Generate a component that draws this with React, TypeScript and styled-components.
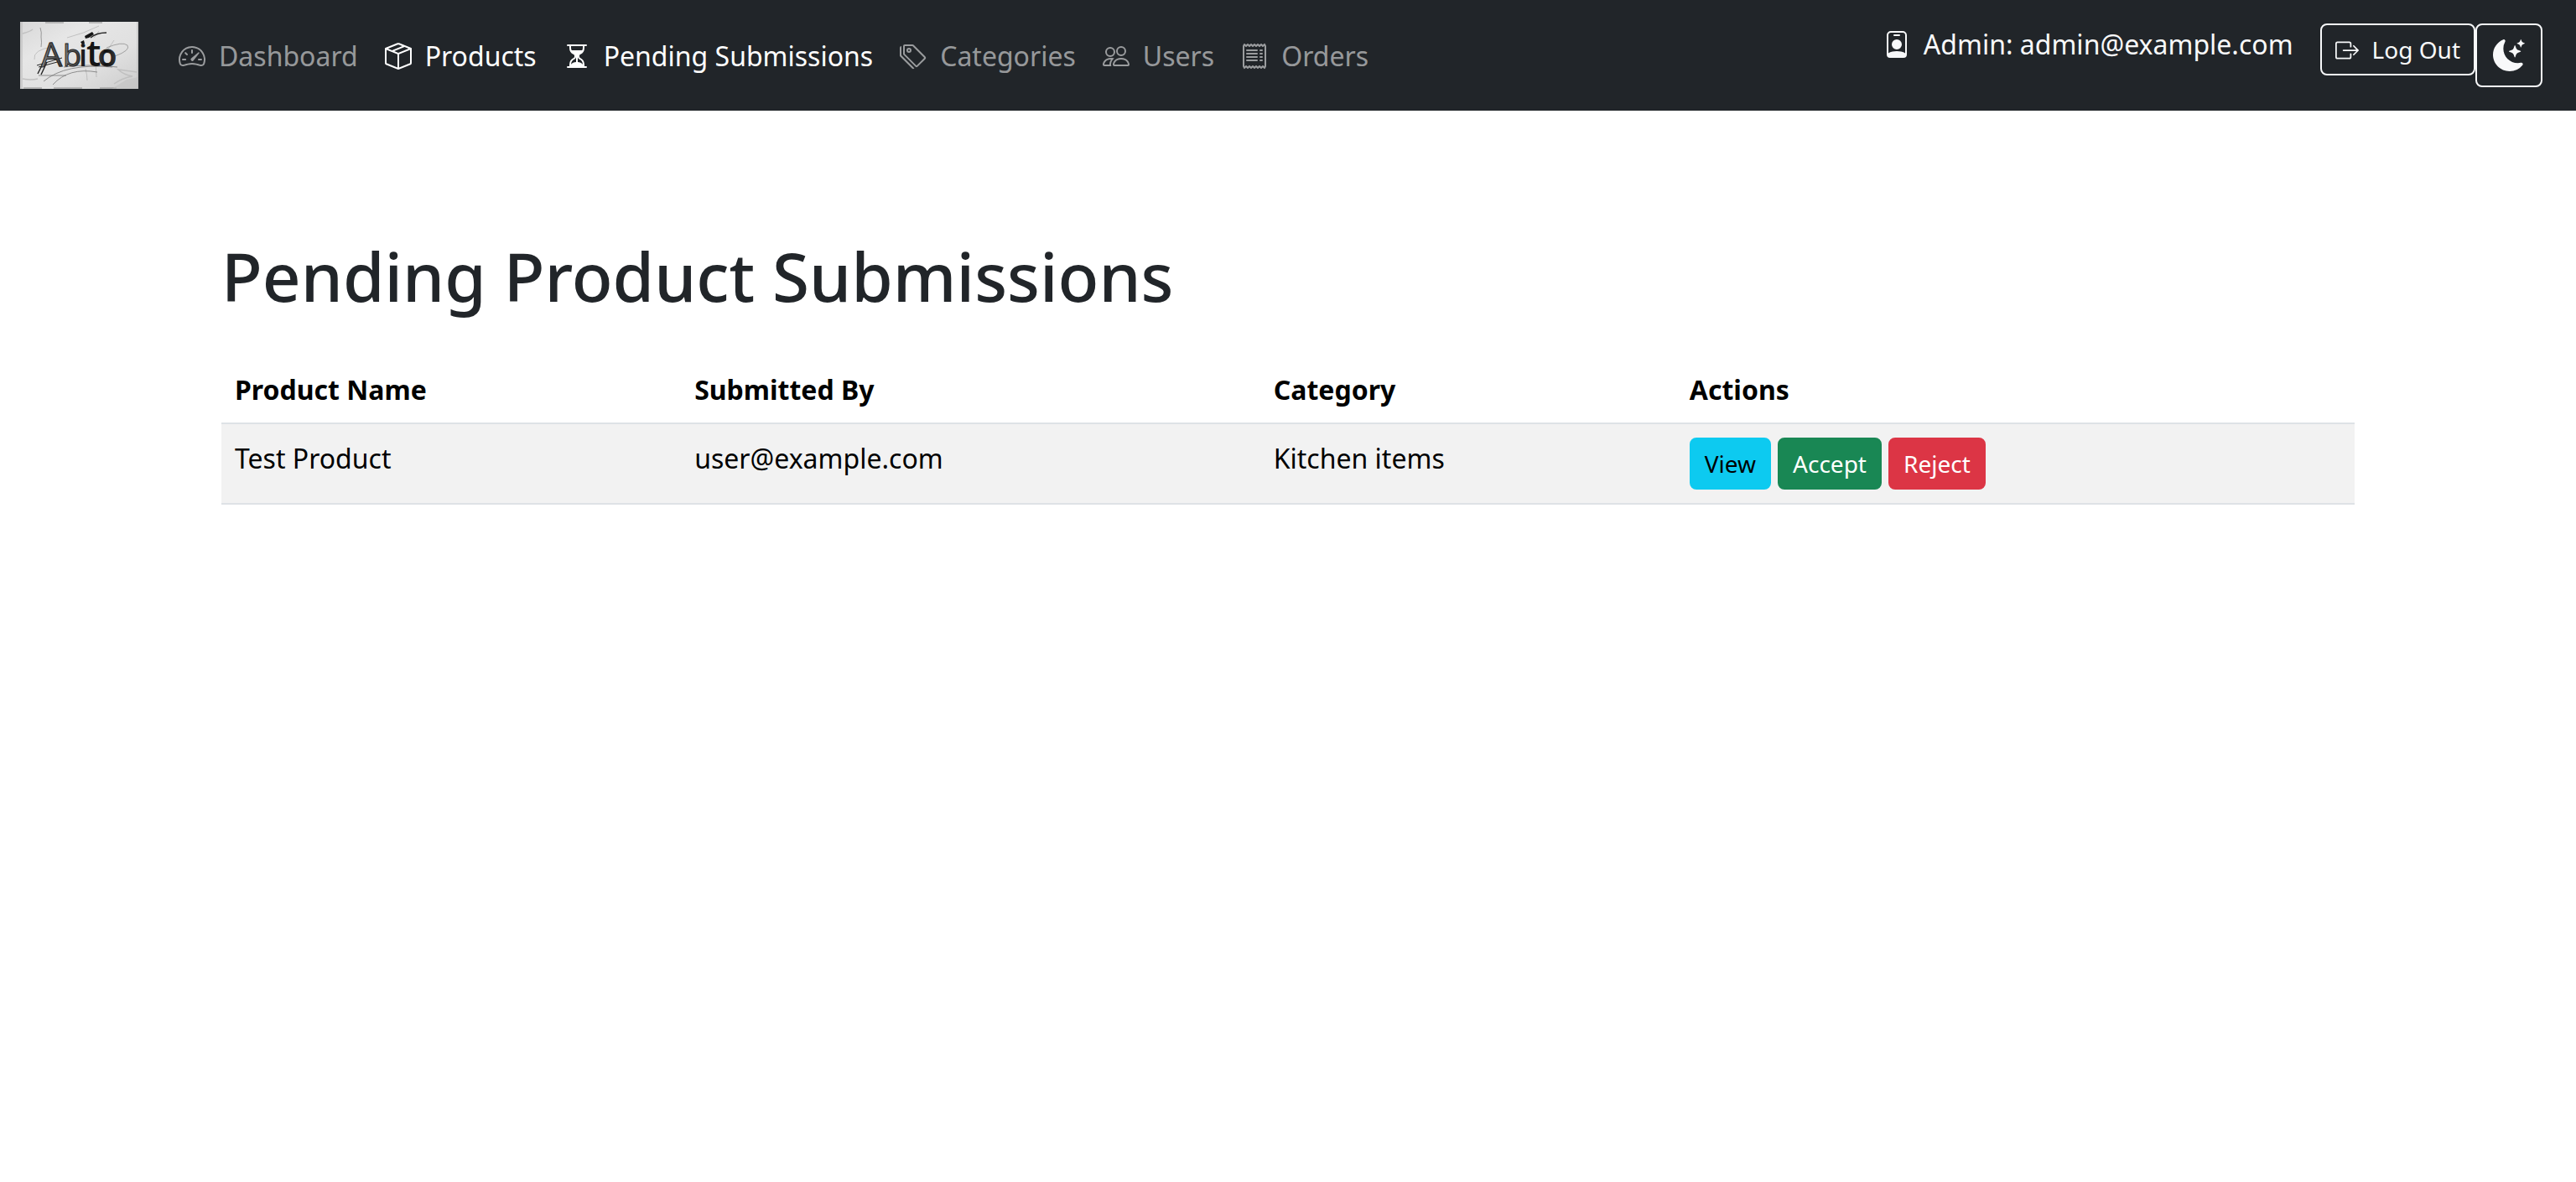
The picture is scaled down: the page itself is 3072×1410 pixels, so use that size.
import React, { useState } from "react";
import styled, { createGlobalStyle } from "styled-components";
import {
  BsBoxArrowRight,
  BsBoxSeam,
  BsHourglassSplit,
  BsMoonStarsFill,
  BsPeople,
  BsPersonBadge,
  BsReceipt,
  BsSpeedometer2,
  BsTags,
} from "react-icons/bs";

const GlobalStyle = createGlobalStyle`
  *, *::before, *::after { box-sizing: border-box; }
  body {
    margin: 0;
    background: #fff;
    color: #212529;
    font-family: "Noto Sans", "Liberation Sans", sans-serif;
    font-size: 32px;
    line-height: 49px;
  }
`;

const Navbar = styled.nav`
  display: flex;
  align-items: center;
  padding: 16px 40px 16px 24px;
  background: #212529;
`;

const Brand = styled.a`
  display: flex;
  margin-right: 32px;
  padding: 10px 0;
`;

const LogoArt = styled.svg`
  display: block;
  width: 141px;
  height: 80px;
`;

const NavList = styled.ul`
  display: flex;
  margin: 0 auto 0 0;
  padding: 0;
  list-style: none;
`;

const NavLink = styled.a<{ $active?: boolean }>`
  display: block;
  padding: 16px 16px 15px;
  color: ${(p) => (p.$active ? "#fff" : "rgba(255, 255, 255, 0.55)")};
  text-decoration: none;
  white-space: nowrap;
`;

const Icon = styled.span`
  margin-right: 16px;

  svg {
    display: inline-block;
    width: 1em;
    height: 1em;
    vertical-align: -0.125em;
  }
`;

const Account = styled.div`
  display: flex;
  align-items: flex-start;
  color: #f8f9fa;
`;

const AdminName = styled.span`
  margin-right: 32px;
  white-space: nowrap;
`;

const SmallButton = styled.button`
  padding: 8px 16px;
  border: 2px solid transparent;
  border-radius: 8px;
  font-family: inherit;
  font-size: 28px;
  line-height: 42px;
  white-space: nowrap;
  cursor: pointer;
`;

const LogoutButton = styled(SmallButton)`
  border-color: #f8f9fa;
  background: transparent;
  color: #f8f9fa;
`;

const ThemeButton = styled.button`
  display: flex;
  align-items: center;
  justify-content: center;
  width: 80px;
  height: 76px;
  padding: 0;
  border: 2px solid #f8f9fa;
  border-radius: 8px;
  background: transparent;
  color: #f8f9fa;
  font-size: 38px;
  cursor: pointer;
`;

const Main = styled.main`
  max-width: 2640px;
  margin: 0 auto;
  padding: 148px 48px 48px;
`;

const Title = styled.h1`
  margin: 0 0 46px;
  font-size: 80px;
  font-weight: 500;
  line-height: 98px;
`;

const Table = styled.table`
  width: 100%;
  border-collapse: collapse;
  color: #000;
`;

const HeadCell = styled.th`
  padding: 16px 16px 15px;
  border-bottom: 2px solid #dee2e6;
  font-weight: 700;
  text-align: left;
`;

const Cell = styled.td`
  padding: 16px;
  border-bottom: 2px solid #dee2e6;
  background: #f2f2f2;
  vertical-align: top;
`;

const Actions = styled.div`
  display: flex;
  gap: 8px;
`;

const tones = {
  info: { bg: "#0dcaf0", fg: "#000" },
  success: { bg: "#198754", fg: "#fff" },
  danger: { bg: "#dc3545", fg: "#fff" },
};

const ActionButton = styled(SmallButton)<{ $tone: keyof typeof tones }>`
  background: ${(p) => tones[p.$tone].bg};
  border-color: ${(p) => tones[p.$tone].bg};
  color: ${(p) => tones[p.$tone].fg};
`;

const navItems = [
  { label: "Dashboard", icon: <BsSpeedometer2 /> },
  { label: "Products", icon: <BsBoxSeam />, active: true },
  { label: "Pending Submissions", icon: <BsHourglassSplit />, active: true },
  { label: "Categories", icon: <BsTags /> },
  { label: "Users", icon: <BsPeople /> },
  { label: "Orders", icon: <BsReceipt /> },
];

const submissions = [
  { name: "Test Product", by: "user@example.com", category: "Kitchen items" },
];

/* Pencil-sketch logo on crumpled paper. */
function Logo() {
  return (
    <LogoArt viewBox="0 0 141 80" role="img" aria-label="Abito">
      <defs>
        <linearGradient id="paper" x1="0" y1="0" x2="1" y2="1">
          <stop offset="0" stopColor="#d8d8d8" />
          <stop offset="0.3" stopColor="#e6e6e6" />
          <stop offset="0.65" stopColor="#e0e0e0" />
          <stop offset="1" stopColor="#cccccc" />
        </linearGradient>
        <linearGradient id="ink" x1="0" y1="0" x2="1" y2="0">
          <stop offset="0" stopColor="#444" />
          <stop offset="0.4" stopColor="#0c0c0c" />
          <stop offset="1" stopColor="#3a3a3a" />
        </linearGradient>
        <linearGradient id="graphite" x1="0" y1="0" x2="1" y2="0">
          <stop offset="0" stopColor="#8a8a8a" />
          <stop offset="0.5" stopColor="#5a5a5a" />
          <stop offset="1" stopColor="#333" />
        </linearGradient>
      </defs>
      <rect width="141" height="80" fill="url(#paper)" />
      <path d="M0 0h3v80H0zM139 0h2v80h-2z" fill="#bdbdbd" opacity="0.6" />
      <path d="M30 1h22M82 1h16M4 79h22M40 79h34M95 79h20" stroke="#8c8c8c" strokeWidth="1" />
      <path d="M3 14q8-2 12-5M3 68q10 2 18 0M139 60q-14-2-22-3 6 6 17 8-12 2-22 9" fill="none" stroke="#c0c0c0" strokeWidth="1.5" />
      <path d="M141 66l-14 3-18 11h32z" fill="#c2c2c2" opacity="0.6" />
      <g fill="none" stroke="#a8a8a8" strokeWidth="0.6">
        <path d="M24 7q2 6 1 11 1 7 0 12" stroke="#666" />
        <path d="M17 45q-2-12 22-15M56 19q20-5 38-14M88 19l6-8M78 56q2 8 2 14M90 48l1 18M104 34l8-12" />
        <path d="M113 41Q132 34 128 28 122 23 103 31" stroke="#777" />
      </g>
      <g fill="none" stroke="#777" strokeWidth="0.8">
        <path d="M22 64h33M28 71Q54 49 110 54M39 75Q58 54 92 60M52 54Q80 50 116 54" />
        <path d="M84 19q7-6 19-6" stroke="#222" strokeWidth="1.3" />
        <path d="M20 52l30-9M22 54l26-7" stroke="#222" strokeWidth="1" />
        <path d="M28 48L21 62M32 48L25 63" stroke="#222" strokeWidth="1.4" />
      </g>
      <path d="M77 17l9-5 2 3-6 4-4 1zM72 24l4-2 1 4-3 1z" fill="#161616" />
      <g fontFamily="Open Sans, sans-serif" fontWeight="600">
        <text x="25" y="54" fontSize="40" fontWeight="400" fill="url(#graphite)" stroke="#222" strokeWidth="1" transform="rotate(-2 25 54)">A</text>
        <text x="51" y="53" fontSize="36" fontWeight="400" fill="url(#graphite)" stroke="#222" strokeWidth="1">b</text>
        <text x="70" y="53" fontSize="36" fill="#1c1c1c">i</text>
        <text x="79" y="53" fontSize="44" fill="#151515">t</text>
        <text x="93" y="53" fontSize="36" fill="url(#ink)" stroke="#222" strokeWidth="1">o</text>
      </g>
    </LogoArt>
  );
}

export default function App() {
  const [dark, setDark] = useState(false);

  return (
    <>
      <GlobalStyle />
      <Navbar aria-label="Main">
        <Brand href="#">
          <Logo />
        </Brand>
        <NavList>
          {navItems.map((item) => (
            <li key={item.label}>
              <NavLink href="#" $active={item.active}>
                <Icon>{item.icon}</Icon>
                {item.label}
              </NavLink>
            </li>
          ))}
        </NavList>
        <Account>
          <AdminName>
            <Icon>
              <BsPersonBadge />
            </Icon>
            Admin: admin@example.com
          </AdminName>
          <LogoutButton type="button">
            <Icon>
              <BsBoxArrowRight />
            </Icon>
            Log Out
          </LogoutButton>
          <ThemeButton
            type="button"
            aria-label="Toggle dark mode"
            aria-pressed={dark}
            onClick={() => setDark(!dark)}
          >
            <BsMoonStarsFill />
          </ThemeButton>
        </Account>
      </Navbar>
      <Main>
        <Title>Pending Product Submissions</Title>
        <Table>
          <thead>
            <tr>
              <HeadCell scope="col">Product Name</HeadCell>
              <HeadCell scope="col">Submitted By</HeadCell>
              <HeadCell scope="col">Category</HeadCell>
              <HeadCell scope="col">Actions</HeadCell>
            </tr>
          </thead>
          <tbody>
            {submissions.map((s) => (
              <tr key={s.name}>
                <Cell>{s.name}</Cell>
                <Cell>{s.by}</Cell>
                <Cell>{s.category}</Cell>
                <Cell>
                  <Actions>
                    <ActionButton type="button" $tone="info">View</ActionButton>
                    <ActionButton type="button" $tone="success">Accept</ActionButton>
                    <ActionButton type="button" $tone="danger">Reject</ActionButton>
                  </Actions>
                </Cell>
              </tr>
            ))}
          </tbody>
        </Table>
      </Main>
    </>
  );
}
